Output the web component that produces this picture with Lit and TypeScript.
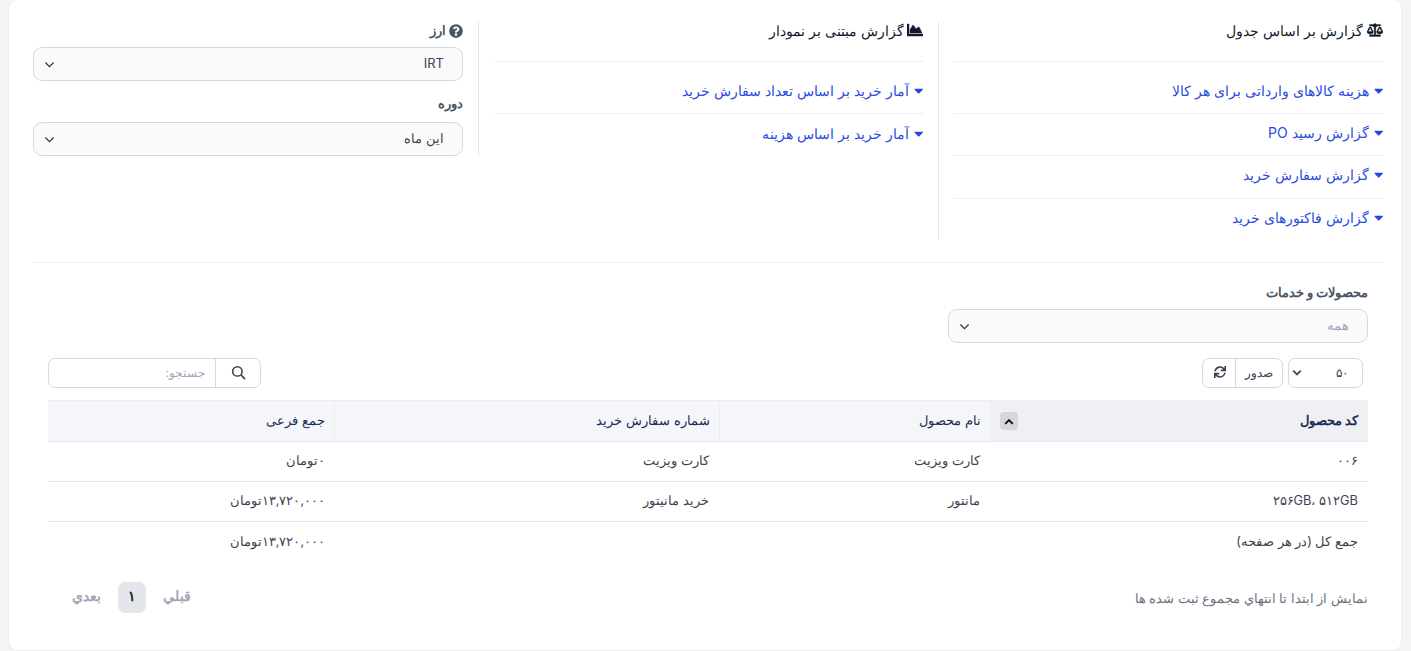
import { LitElement, html, css, svg } from "lit";
import { customElement } from "lit/decorators.js";

const balance = svg`<path d="M256 336h-.02c0-16.18 1.34-8.73-85.05-181.51-17.65-35.29-68.19-35.36-85.87 0C-2.06 328.75.02 320.33.02 336H0c0 44.18 57.31 80 128 80s128-35.82 128-80zM128 176l72 144H56l72-144zm511.98 160c0-16.18 1.34-8.73-85.05-181.51-17.65-35.29-68.19-35.36-85.87 0-87.12 174.26-85.04 165.84-85.04 181.51H384c0 44.18 57.31 80 128 80s128-35.82 128-80h-.02zM440 320l72-144 72 144H440zm88 128H352V153.25c23.51-10.29 41.16-31.48 46.39-57.25H528c8.84 0 16-7.16 16-16V48c0-8.84-7.16-16-16-16H383.64C369.04 12.68 346.09 0 320 0s-49.04 12.68-63.64 32H112c-8.84 0-16 7.16-16 16v32c0 8.84 7.16 16 16 16h129.61c5.23 25.76 22.87 46.96 46.39 57.25V448H112c-8.84 0-16 7.16-16 16v32c0 8.84 7.16 16 16 16h416c8.84 0 16-7.16 16-16v-32c0-8.84-7.16-16-16-16z"/>`;
const area = svg`<path d="M500 384c6.6 0 12 5.4 12 12v40c0 6.6-5.4 12-12 12H12c-6.6 0-12-5.4-12-12V76c0-6.6 5.4-12 12-12h40c6.6 0 12 5.4 12 12v308h436zM372.7 159.5L288 216l-85.3-113.7c-5.1-6.8-15.5-6.3-19.9 1L96 248v104h384l-89.9-187.8c-3.2-6.5-11.4-8.7-17.4-4.7z"/>`;
const caret = html`<svg class="caret" viewBox="0 0 320 512" fill="currentColor"><path d="M31.3 192h257.3c17.8 0 26.7 21.5 14.1 34.1L174.1 354.8c-7.8 7.8-20.5 7.8-28.3 0L17.2 226.1C4.6 213.5 13.5 192 31.3 192z"/></svg>`;
const question = html`<svg class="q" viewBox="0 0 512 512" fill="currentColor"><path d="M504 256c0 136.997-111.043 248-248 248S8 392.997 8 256C8 119.083 119.043 8 256 8s248 111.083 248 248zM262.655 90c-54.497 0-89.255 22.957-116.549 63.758-3.536 5.286-2.353 12.415 2.715 16.258l34.699 26.31c5.205 3.947 12.621 3.008 16.665-2.122 17.864-22.658 30.113-35.797 57.303-35.797 20.429 0 45.698 13.148 45.698 32.958 0 14.976-12.363 22.667-32.534 33.976C247.128 238.528 216 254.941 216 296v4c0 6.627 5.373 12 12 12h56c6.627 0 12-5.373 12-12v-1.333c0-28.462 83.186-29.647 83.186-106.667 0-58.002-60.165-102-116.531-102zM256 338c-25.365 0-46 20.635-46 46 0 25.364 20.635 46 46 46s46-20.636 46-46c0-25.365-20.635-46-46-46z"/></svg>`;
const sync = html`<svg class="sync" viewBox="0 0 512 512" fill="currentColor"><path d="M440.65 12.57l4 82.77A247.16 247.16 0 0 0 255.83 8C134.73 8 33.91 94.92 12.29 209.82A12 12 0 0 0 24.09 224h49.05a12 12 0 0 0 11.67-9.26 175.91 175.91 0 0 1 317-56.94l-101.46-4.86a12 12 0 0 0-12.57 12v47.41a12 12 0 0 0 12 12H500a12 12 0 0 0 12-12V12a12 12 0 0 0-12-12h-47.37a12 12 0 0 0-11.98 12.57zM255.83 432a175.61 175.61 0 0 1-146-77.8l101.8 4.87a12 12 0 0 0 12.57-12v-47.4a12 12 0 0 0-12-12H12a12 12 0 0 0-12 12V500a12 12 0 0 0 12 12h47.35a12 12 0 0 0 12-12.6l-4.15-82.57A247.17 247.17 0 0 0 255.83 504c121.11 0 221.93-86.92 243.55-201.82a12 12 0 0 0-11.8-14.18h-49.05a12 12 0 0 0-11.67 9.26A175.86 175.86 0 0 1 255.83 432z"/></svg>`;
const chevron = html`<svg class="chev" viewBox="0 0 12 8" fill="none" stroke="currentColor" stroke-width="1.3"><path d="M1.5 1.5 6 6l4.5-4.5"/></svg>`;
const heavyChev = html`<svg class="chev" viewBox="0 0 12 8" fill="none" stroke="currentColor" stroke-width="2.4"><path d="M1.5 1.5 6 6l4.5-4.5"/></svg>`;

@customElement("app-root")
export class AppRoot extends LitElement {
  static styles = css`
    :host { display: block; min-height: 651px; background: #f5f5f5; font-family: Inter, sans-serif; font-size: 13px; color: #3f4254; }
    * { box-sizing: border-box; }
    .card { margin: 0 10px 0 9px; height: 650px; background: #fff; border-radius: 8px; padding: 22px 18px 0 24px; box-shadow: 0 0 2px rgba(0,0,0,.1); }
    .top { display: grid; grid-template-columns: repeat(3, 460px); margin: 0 -15px; align-items: start; }
    .col { padding: 0 15px; }
    .bordered { border-left: 1px solid #e4e8ee; }
    .head { height: 40px; border-bottom: 1px solid #eceef1; display: flex; align-items: flex-start; gap: 4.5px; color: #14182b; font-size: 14px; line-height: 17px; }
    .head svg { height: 14px; width: 16px; fill: #14182b; stroke: #14182b; stroke-width: 14; margin-top: 1px; flex: none; }
    .head.chart { gap: 3px; }
    .head.chart svg { height: 16px; margin-top: 0; }
    .links { padding-top: 10px; }
    .link { height: 42.2px; display: flex; align-items: center; gap: 5px; color: #2b4ae0; font-size: 14px; border-bottom: 1px solid #eceef1; padding-bottom: 5px; }
    .link:last-child { border-bottom: none; height: 41.4px; padding-bottom: 3px; }
    .caret { width: 9.4px; height: 15px; flex: none; color: #2547e0; }
    .label { display: flex; align-items: center; gap: 3px; font-weight: 700; font-size: 12.5px; color: #4b5563; line-height: 16px; }
    .q { width: 14px; height: 14px; color: #4b5563; }
    .select { height: 34px; border: 1px solid #d8d8e2; border-radius: 9px; background: #fafafb; display: flex; align-items: center; justify-content: space-between; padding: 0 18px 2px 10px; font-size: 13px; color: #3f4254; }
    .chev { width: 11px; height: 7.5px; color: #333; margin-top: 3px; }
    .l1 { margin: 1px 0 8px; }
    .l2 { margin: 15px 0 10px; }
    .rule { height: 1px; background: #eceef1; margin: 22px 0; }
    .products { padding: 0 15px; }
    .pwrap { width: 420px; }
    .pwrap .label { margin-bottom: 8px; }
    .ph { color: #a1a5b7; font-size: 13px; }
    .bar { display: flex; justify-content: space-between; margin-top: 15px; height: 30px; padding-right: 5px; }
    .barR { display: flex; gap: 5px; }
    .size { width: 75px; height: 30px; border: 1px solid #d8d8e2; border-radius: 7px; display: flex; align-items: center; justify-content: space-between; padding: 0 14px 0 3px; font-size: 12px; }
    .size .chev { width: 10px; color: #4b4b4b; margin-top: 0; }
    .group { display: flex; height: 30px; border: 1px solid #d8d8e2; border-radius: 7px; width: 81px; }
    .group span { flex: 1; display: flex; align-items: center; justify-content: center; font-size: 12px; }
    .group span:last-child { flex: none; width: 33px; border-right: 1px solid #d8d8e2; padding: 0 0 2px 2px; }
    .sync { width: 12px; height: 12px; color: #3a3f4f; }
    .search { display: flex; width: 213px; height: 30px; border: 1px solid #d8d8e2; border-radius: 7px; flex-direction: row-reverse; }
    .search .input { flex: 1; display: flex; align-items: center; padding-right: 10px; color: #a1a5b7; font-size: 12px; }
    .search .btn { width: 45px; border-left: 1px solid #d8d8e2; display: flex; align-items: center; justify-content: center; }
    .search svg { width: 15px; height: 15px; color: #3a4553; }
    table { width: 1320px; border-collapse: collapse; table-layout: fixed; margin-top: 12px; }
    th { height: 41px; background: #f5f6f9; border-top: 1px solid #eceef1; border-bottom: 1px solid #e6e8ec; border-left: 1px solid #eceef1; text-align: right; padding: 0 9px 2px; font-weight: 400; font-size: 13px; color: #1c2b56; }
    th:last-child { border-left: none; }
    th.sorted { background: #eff0f3; font-weight: 700; font-size: 13.3px; padding-right: 10px; }
    .thin { display: flex; align-items: center; justify-content: space-between; }
    .sort { width: 18px; height: 18px; background: #d5d7dd; border-radius: 4px; display: flex; align-items: center; justify-content: center; margin-top: 3px; }
    .sort svg { transform: rotate(180deg); color: #111; width: 10px; margin-top: 0; }
    td { height: 40px; text-align: right; padding: 0 10px 1px; font-size: 12.8px; border-bottom: 1px solid #e8e9ed; color: #3f4254; }
    td.amount { font-size: 12.5px; padding-right: 9px; }
    tr:last-child td { border-bottom: none; }
    .foot { display: flex; align-items: center; justify-content: space-between; margin-top: 21px; height: 31px; color: #6b7280; padding-left: 24px; font-size: 12.6px; }
    .foot > span { padding-top: 2px; }
    .pager { display: flex; align-items: center; gap: 17px; font-weight: 700; color: #a1a5b7; font-size: 13.5px; }
    .pager span { padding-bottom: 3px; }
    .pager .page { width: 28px; height: 31px; border-radius: 7px; background: #e4e6ec; color: #181c32; display: flex; align-items: center; justify-content: center; }
  `;

  private heading(icon: unknown, vb: string, text: string, cls = "") {
    return html`<div class="head ${cls}"><svg viewBox=${vb}>${icon}</svg><span>${text}</span></div>`;
  }
  private links(items: string[]) {
    return html`<div class="links">${items.map((t) => html`<div class="link">${caret}<span>${t}</span></div>`)}</div>`;
  }

  render() {
    return html`<div class="card" dir="rtl">
      <div class="top">
        <div class="col bordered">
          ${this.heading(balance, "0 0 640 512", "گزارش بر اساس جدول")}
          ${this.links(["هزینه کالاهای وارداتی برای هر کالا", "گزارش رسید PO", "گزارش سفارش خرید", "گزارش فاکتورهای خرید"])}
        </div>
        <div class="col bordered">
          ${this.heading(area, "0 0 512 512", "گزارش مبتنی بر نمودار", "chart")}
          ${this.links(["آمار خرید بر اساس تعداد سفارش خرید", "آمار خرید بر اساس هزینه"])}
        </div>
        <div class="col">
          <div class="label l1">${question}<span>ارز</span></div>
          <div class="select"><span>IRT</span>${chevron}</div>
          <div class="label l2"><span>دوره</span></div>
          <div class="select"><span>این ماه</span>${chevron}</div>
        </div>
      </div>
      <div class="rule"></div>
      <div class="products">
        <div class="pwrap">
          <div class="label"><span>محصولات و خدمات</span></div>
          <div class="select"><span class="ph">همه</span>${chevron}</div>
        </div>
        <div class="bar">
          <div class="barR">
            <div class="size"><span>۵۰</span>${heavyChev}</div>
            <div class="group"><span>صدور</span><span>${sync}</span></div>
          </div>
          <div class="search">
            <div class="input">جستجو:</div>
            <div class="btn"><svg viewBox="0 0 16 16" fill="none" stroke="currentColor" stroke-width="1.7"><circle cx="6.8" cy="6.8" r="5"/><path d="m10.6 10.6 4.4 4.4"/></svg></div>
          </div>
        </div>
        <table>
          <colgroup><col style="width:378px" /><col style="width:271px" /><col style="width:385px" /><col style="width:286px" /></colgroup>
          <thead><tr>
            <th class="sorted"><div class="thin"><span>کد محصول</span><span class="sort">${heavyChev}</span></div></th>
            <th>نام محصول</th><th>شماره سفارش خرید</th><th>جمع فرعی</th>
          </tr></thead>
          <tbody>
            <tr><td>۰۰۶</td><td>کارت ویزیت</td><td>کارت ویزیت</td><td class="amount">۰تومان</td></tr>
            <tr><td>۲۵۶GB، ۵۱۲GB</td><td>مانتور</td><td>خرید مانیتور</td><td class="amount">۱۳,۷۲۰,۰۰۰تومان</td></tr>
            <tr><td>جمع کل (در هر صفحه)</td><td></td><td></td><td class="amount">۱۳,۷۲۰,۰۰۰تومان</td></tr>
          </tbody>
        </table>
        <div class="foot">
          <span>نمایش از ابتدا تا انتهاي مجموع ثبت شده ها</span>
          <div class="pager"><span>قبلي</span><span class="page">۱</span><span>بعدي</span></div>
        </div>
      </div>
    </div>`;
  }
}
